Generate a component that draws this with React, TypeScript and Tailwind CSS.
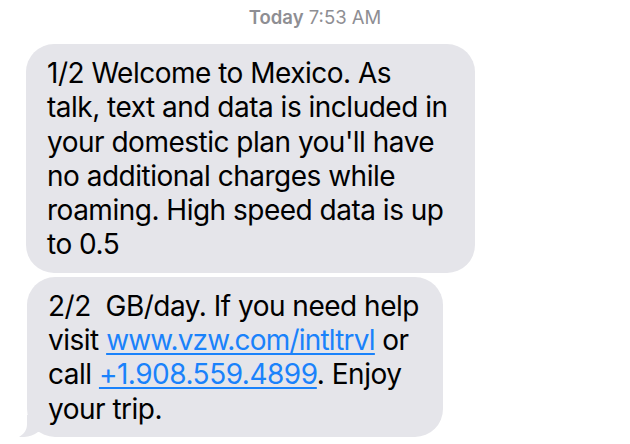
import React from "react"

const font = { fontFamily: "Inter, 'Noto Sans', sans-serif" }

function Bubble({ children, tail, className }: { children: React.ReactNode; tail?: boolean; className: string }) {
  return (
    <div className={`relative whitespace-nowrap rounded-[28px] bg-[#e5e5ea] pl-[21px] pt-3 pb-[11px] text-[28px] leading-[34.3px] tracking-[-0.5px] text-black ${className}`}>
      {children}
      {tail && (
        <svg className="absolute -left-[9px] bottom-0" width="26" height="22" viewBox="0 0 26 22">
          <path d="M9 0 L9 9 C9 15 6 19 1 22 C8 22.5 15 21 20 17 L26 17 L26 0 Z" fill="#e5e5ea" />
        </svg>
      )}
    </div>
  )
}

export default function App() {
  return (
    <div className="w-[630px] h-[444px] overflow-hidden bg-white" style={font}>
      <div className="h-[44px] pt-[6px] text-center text-[18.5px] leading-[22px] text-[#8e8e93]">
        <span className="font-semibold">Today</span> 7:53 AM
      </div>

      <Bubble className="ml-[26px] w-[449px]">
        1/2 Welcome to Mexico. As<br />
        talk, text and data is included in<br />
        your domestic plan you'll have<br />
        no additional charges while<br />
        roaming. High speed data is up<br />
        to 0.5
      </Bubble>

      <Bubble tail className="mt-1 ml-[27px] w-[416px]">
        2/2&nbsp; GB/day. If you need help<br />
        visit <span className="text-[#1a82fb] tracking-[-0.8px] underline decoration-[1.5px] underline-offset-[3px]">www.vzw.com/intltrvl</span> or<br />
        call <span className="text-[#1a82fb] underline decoration-[1.5px] underline-offset-[3px]">+1.908.559.4899</span>. Enjoy<br />
        your trip.
      </Bubble>
    </div>
  )
}
